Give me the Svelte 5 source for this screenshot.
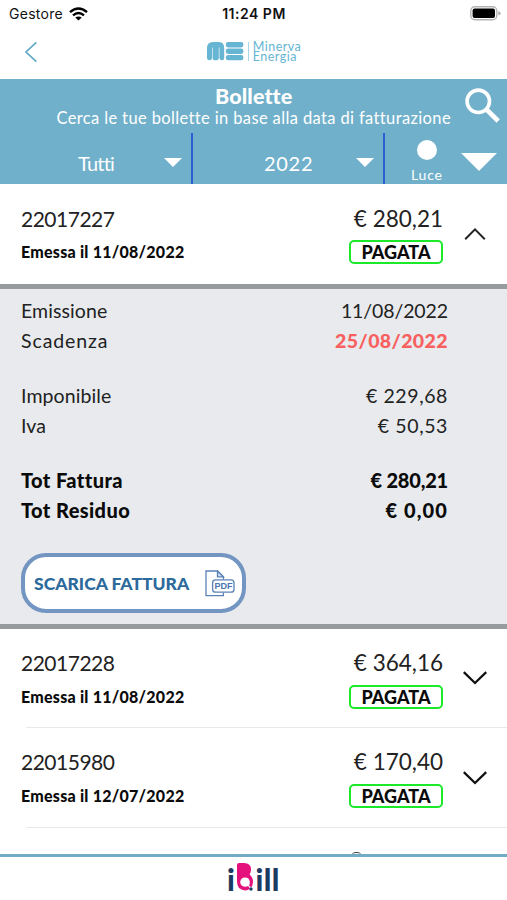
<script>
    let openId = '22017227'

    const bills = [
        { id: '22017227', issued: '11/08/2022', total: '280,21', state: 'PAGATA' },
        { id: '22017228', issued: '11/08/2022', total: '364,16', state: 'PAGATA' },
        { id: '22015980', issued: '12/07/2022', total: '170,40', state: 'PAGATA' }
    ]

    const details = [
        [
            { label: 'Emissione', value: '11/08/2022' },
            { label: 'Scadenza', value: '25/08/2022', kind: 'due' }
        ],
        [
            { label: 'Imponibile', value: '€ 229,68', kind: 'net' },
            { label: 'Iva', value: '€ 50,53', kind: 'net' }
        ],
        [
            { label: 'Tot Fattura', value: '€ 280,21', kind: 'total' },
            { label: 'Tot Residuo', value: '€ 0,00', kind: 'total' }
        ]
    ]

    /**
	 * @param {string} id
	 */
    function toggle(id) {
        openId = openId === id ? '' : id
    }
</script>

<div class="screen">
    <div class="status">
        <div class="carrier">
            <span>Gestore</span>
            <svg width="19" height="14" viewBox="0 0 19 14" fill="none" stroke="#000" stroke-width="2.4">
                <path d="M1 5.1Q9.5 -2.3 18 5.1" />
                <path d="M4 8.3Q9.5 3.6 15 8.3" />
                <path d="M9.5 13.6L6.3 10.6Q9.5 8.2 12.7 10.6Z" fill="#000" stroke="none" />
            </svg>
        </div>
        <span class="clock">11:24 PM</span>
        <svg class="battery" width="31" height="15" viewBox="0 0 31 15">
            <rect x="0.8" y="0.8" width="26" height="13" rx="4" fill="#fff" stroke="#b4b4b4" stroke-width="1.4" />
            <rect x="2.6" y="2.6" width="22.4" height="9.4" rx="2" />
            <path d="M28.4 5v4.6Q30.6 8.8 30.6 7.3T28.4 5Z" fill="#aaa" />
        </svg>
    </div>

    <header>
        <button class="back" aria-label="Indietro">
            <svg width="14" height="22" viewBox="0 0 14 22" fill="none" stroke="#62a9c6" stroke-width="1.7">
                <path d="M12.3 1.3L2 11L12.3 20.7" />
            </svg>
        </button>
        <div class="logo">
            <svg width="37" height="19" viewBox="0 0 37 19" fill="#66b5d2">
                <path d="M0 17V6Q0 0 6 0H12Q17.2 0 17.2 6V16Q17.2 18.3 15 18.3T12.4 16V5.5H11.8V16Q11.8 18.3 8.7 18.3T5.6 16V5.5H5V16Q5 18.3 2.5 18.3T0 16Z" />
                <rect x="18.8" y="0" width="17.6" height="5.4" rx="2.4" />
                <rect x="18.8" y="6.5" width="17.6" height="5.4" rx="2.4" />
                <rect x="18.8" y="12.9" width="17.6" height="5.4" rx="2.4" />
            </svg>
            <div class="name"><span>Minerva</span><span>Energia</span></div>
        </div>
    </header>

    <section class="search">
        <div class="intro">
            <div>
                <h1>Bollette</h1>
                <p>Cerca le tue bollette in base alla data di fatturazione</p>
            </div>
            <svg width="36" height="36" viewBox="0 0 36 36" fill="none" stroke="#fff">
                <circle cx="13.3" cy="13.3" r="11.2" stroke-width="3.6" />
                <path d="M21 21L33.2 33" stroke-width="4.6" />
            </svg>
        </div>
        <div class="filters">
            <div class="filter">
                <span class="tutti">Tutti</span>
                <svg width="18" height="9"><path d="M0 0H18L9 9Z" fill="#fff" /></svg>
            </div>
            <div class="filter">
                <span class="year">2022</span>
                <svg width="18" height="9"><path d="M0 0H18L9 9Z" fill="#fff" /></svg>
            </div>
            <div class="supply">
                <div class="kind"><i></i><span>Luce</span></div>
                <svg width="36" height="18"><path d="M0 0H36L18 18Z" fill="#fff" /></svg>
            </div>
        </div>
    </section>

    <main>
        {#each bills as bill}
            <div class="bill" class:open={openId === bill.id}>
                <div class="left">
                    <span class="number">{bill.id}</span>
                    <span class="issued">Emessa il {bill.issued}</span>
                </div>
                <div class="right">
                    <span class="amount">€ {bill.total}</span>
                    <span class="badge">{bill.state}</span>
                </div>
                <button class="arrow" aria-label="Dettagli" on:click={() => toggle(bill.id)}>
                    {#if openId === bill.id}
                        <svg width="24" height="14" viewBox="0 0 24 14" fill="none" stroke="#222" stroke-width="2">
                            <path d="M2.2 12.2L12 2.4L21.8 12.2" />
                        </svg>
                    {:else}
                        <svg width="24" height="14" viewBox="0 0 24 14" fill="none" stroke="#111" stroke-width="2.3">
                            <path d="M0.8 1.2L12 12L23.2 1.2" />
                        </svg>
                    {/if}
                </button>
            </div>
            {#if openId === bill.id}
                <div class="details">
                    {#each details as group}
                        <div class="group">
                            {#each group as row}
                                <div class="row {row.kind ?? ''}">
                                    <span class="label">{row.label}</span>
                                    <span class="value">{row.value}</span>
                                </div>
                            {/each}
                        </div>
                    {/each}
                    <button class="download">
                        <span>SCARICA FATTURA</span>
                        <svg width="30" height="27" viewBox="0 0 30 27" fill="none" stroke="#5a82b8" stroke-width="1.3">
                            <path d="M18.4 9.2V6.8L12.5 1H1V25.6H18.4V22.6" />
                            <path d="M12.5 1V6.8H18.4Z" fill="#cfdcf0" />
                            <rect x="7.6" y="9.8" width="21.4" height="12.4" rx="3" fill="#fff" />
                            <text x="18.4" y="19.3" text-anchor="middle">PDF</text>
                        </svg>
                    </button>
                </div>
            {/if}
        {/each}
        <!-- top edge of the next row -->
        <div class="next"><i></i></div>
    </main>

    <footer>
        <div class="ibill">
            <span>i</span>
            <svg width="16" height="28" viewBox="0 0 16 28">
                <path d="M0 2Q0 0 2 0H7Q14 0 14 6.5Q14 9.5 12.6 11.6Q16 14.3 16 18.8Q16 22 14.4 24.2L12 22.8Q13 20.8 12.8 18.8Q12.3 14.5 8 14.5T3.2 19Q3.2 23.2 8 23.8Q10 23.8 11.2 23L13 25.8Q10.8 27.4 8 27.4Q0 27 0 18.6Z" fill="#e5127d" />
                <circle cx="14" cy="26" r="1.7" fill="#1d3a63" />
            </svg>
            <span>ill</span>
        </div>
    </footer>
</div>

<style>
    :global(body) {
        margin: 0;
        background: #fff;
    }

    * {
        box-sizing: border-box;
    }

    button {
        padding: 0;
        border: 0;
        background: none;
        font-family: inherit;
        cursor: pointer;
    }

    svg {
        display: block;
        flex: none;
    }

    .screen {
        display: flex;
        flex-direction: column;
        width: 100%;
        height: 900px;
        overflow: hidden;
        font-family: Lato, sans-serif;
        color: #222;
    }

    .status {
        display: grid;
        grid-template-columns: 1fr auto 1fr;
        align-items: center;
        height: 27px;
        padding: 0 6px 0 9px;
        font-family: Inter, sans-serif;
        font-size: 14px;
        color: #111;
    }

    .carrier {
        display: flex;
        align-items: center;
        gap: 6px;
        letter-spacing: 0.28px;
    }

    .clock {
        font-weight: 600;
        letter-spacing: 0.5px;
        margin-left: -2px;
    }

    .battery {
        justify-self: end;
    }

    header {
        display: grid;
        grid-template-columns: 1fr auto 1fr;
        align-items: center;
        height: 52px;
        padding: 0 0 3px 24px;
    }

    .back {
        justify-self: start;
    }

    .logo {
        display: flex;
        align-items: center;
        gap: 4px;
        margin-left: -23px;
    }

    .name {
        display: flex;
        flex-direction: column;
        padding-left: 4px;
        border-left: 1px solid #a9d5e5;
        font-size: 12.5px;
        line-height: 9.5px;
        color: #66b5d2;
        letter-spacing: 0.5px;
    }

    .search {
        height: 105px;
        background: #71b0ca;
        color: #fff;
    }

    .intro {
        display: flex;
        justify-content: flex-end;
        height: 54px;
        padding: 6px 6px 0 0;
        gap: 14px;
        text-align: center;
    }

    .intro svg {
        margin-top: 3px;
    }

    h1 {
        margin: 0;
        font-size: 21.5px;
        line-height: 22px;
        font-weight: 900;
        letter-spacing: 0.1px;
    }

    p {
        margin: 0;
        font-size: 16.5px;
        line-height: 22px;
        letter-spacing: 0.37px;
        white-space: nowrap;
    }

    .filters {
        display: flex;
        height: 51px;
    }

    .filter {
        display: flex;
        align-items: center;
        width: 192px;
        padding: 9px 9px 0 0;
        border-right: 2px solid #2e5fd0;
        font-size: 20px;
    }

    .filter:first-child {
        width: 193px;
    }

    .filter span {
        flex: 1;
    }

    .filter .tutti {
        padding-left: 78px;
        letter-spacing: -0.8px;
    }

    .filter .year {
        padding-left: 71px;
        letter-spacing: 0.7px;
    }

    .filter svg {
        margin-top: -1px;
    }

    .supply {
        display: flex;
        flex: 1;
        justify-content: space-between;
        align-items: center;
        padding: 7px 10px 0 26px;
    }

    .supply > svg {
        margin-top: -1px;
    }

    .kind {
        display: flex;
        flex-direction: column;
        align-items: center;
        gap: 6px;
        font-size: 14px;
        line-height: 18px;
        letter-spacing: 0.8px;
    }

    .kind i {
        width: 20px;
        height: 20px;
        border-radius: 50%;
        background: #fff;
    }

    main {
        flex: 1;
        overflow: hidden;
    }

    .bill {
        display: flex;
        align-items: center;
        height: 99.5px;
        padding: 0 20px 0 21px;
        background: linear-gradient(#e9e9e9, #e9e9e9) 26px 100% / 100% 1px no-repeat;
    }

    .bill.open {
        height: 100px;
        background: none;
    }

    .left, .right {
        display: flex;
        flex-direction: column;
        gap: 9px;
        padding-top: 2px;
    }

    .open .left, .open .right {
        gap: 8px;
    }

    .left {
        flex: 1;
    }

    .right {
        align-items: flex-end;
        margin-right: 20px;
    }

    .number {
        font-size: 21px;
        line-height: 26px;
        letter-spacing: -0.5px;
    }

    .issued {
        height: 24px;
        font-size: 16px;
        line-height: 24px;
        font-weight: 900;
        color: #0b0b0b;
        letter-spacing: 0.24px;
    }

    .amount {
        font-size: 22.5px;
        line-height: 26px;
    }

    .badge {
        width: 94px;
        height: 24px;
        border: 2.5px solid #1bea2a;
        border-radius: 5px;
        font-size: 18px;
        line-height: 21px;
        font-weight: 900;
        text-align: center;
        color: #0b0b0b;
    }

    .arrow {
        width: 24px;
    }

    .next {
        padding-left: 352px;
    }

    .next i {
        display: block;
        width: 9px;
        height: 6px;
        margin-top: 24.5px;
        border-top: 1.5px solid #333;
        border-radius: 50%;
    }

    .details {
        display: flex;
        flex-direction: column;
        height: 344.5px;
        padding: 7px 59px 0 21px;
        border: solid #969b9e;
        border-width: 5px 0;
        background: #e8eaed;
    }

    .group {
        margin-bottom: 24.2px;
    }

    .row {
        display: flex;
        justify-content: space-between;
        height: 30.3px;
        font-size: 19.5px;
        line-height: 30px;
    }

    .label {
        letter-spacing: 0.1px;
    }

    .value {
        letter-spacing: -0.1px;
    }

    .net .value {
        letter-spacing: 0.6px;
    }

    .due .label {
        letter-spacing: 0.9px;
    }

    .due .value {
        font-weight: 900;
        color: #f8605f;
        letter-spacing: 0.4px;
    }

    .total {
        font-size: 20px;
        line-height: 29px;
        font-weight: 900;
        color: #0b0b0b;
    }

    .total .label {
        letter-spacing: 0.4px;
    }

    .total .value {
        letter-spacing: -0.2px;
    }

    .total:last-child .value {
        letter-spacing: 1.1px;
    }

    .download {
        display: flex;
        flex: none;
        align-items: center;
        width: 225px;
        height: 60px;
        margin-top: 3px;
        padding: 0 7px 0 9px;
        border: 4px solid #7395c1;
        border-radius: 25px;
        background: #fff;
        color: #2d6a9c;
        font-size: 17.5px;
        font-weight: 900;
        justify-content: space-between;
        white-space: nowrap;
    }

    .download text {
        font-family: "Liberation Sans", sans-serif;
        font-size: 9px;
        font-weight: 700;
        stroke: none;
        fill: #4a75b0;
    }

    footer {
        display: flex;
        justify-content: center;
        height: 46px;
        padding-top: 7px;
        border-top: 3px solid #71abc5;
    }

    .ibill {
        display: flex;
        gap: 2px;
        font-size: 30px;
        line-height: 31px;
        font-weight: 900;
        color: #1d3a63;
        letter-spacing: 0.5px;
    }

    .ibill svg {
        margin-top: -1px;
    }
</style>
